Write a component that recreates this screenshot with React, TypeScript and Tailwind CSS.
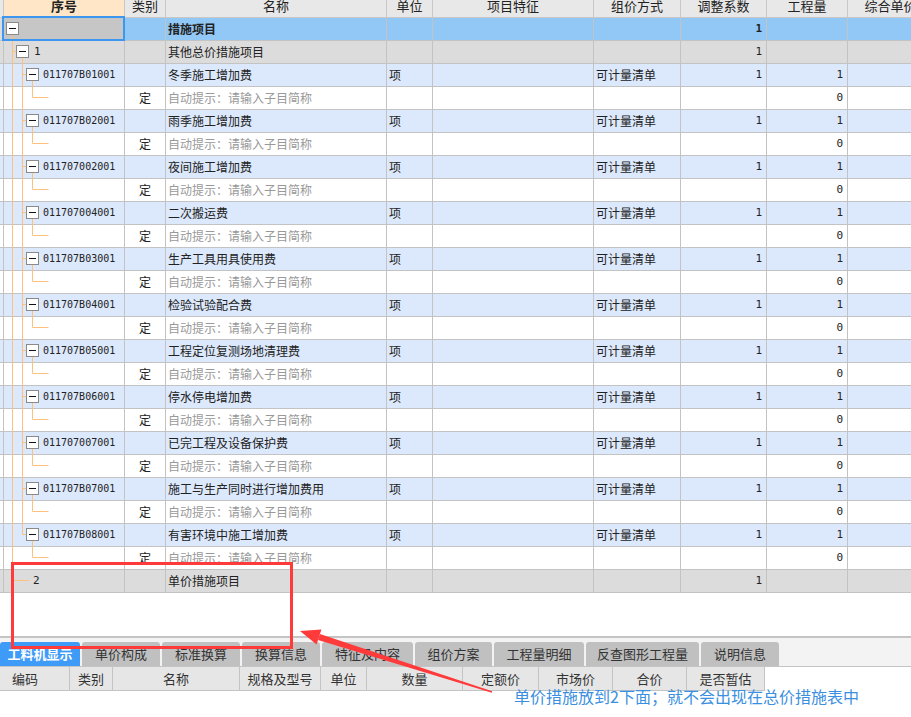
import React from 'react';

type Kind = 'root' | 'group1' | 'item' | 'itemLast' | 'ding' | 'dingLast' | 'group2';

interface Row {
    kind: Kind;
    code?: string;
    cat?: string;
    name?: string;
    unit?: string;
    method?: string;
    coef?: string;
    qty?: string;
}

const items: [string, string][] = [
    ['011707B01001', '冬季施工增加费'],
    ['011707B02001', '雨季施工增加费'],
    ['011707002001', '夜间施工增加费'],
    ['011707004001', '二次搬运费'],
    ['011707B03001', '生产工具用具使用费'],
    ['011707B04001', '检验试验配合费'],
    ['011707B05001', '工程定位复测场地清理费'],
    ['011707B06001', '停水停电增加费'],
    ['011707007001', '已完工程及设备保护费'],
    ['011707B07001', '施工与生产同时进行增加费用'],
    ['011707B08001', '有害环境中施工增加费'],
];

const rows: Row[] = [
    { kind: 'root', name: '措施项目', coef: '1' },
    { kind: 'group1', code: '1', name: '其他总价措施项目', coef: '1' },
    ...items.flatMap(([code, name], i): Row[] => {
        const last = i === items.length - 1;
        return [
            { kind: last ? 'itemLast' : 'item', code, name, unit: '项', method: '可计量清单', coef: '1', qty: '1' },
            { kind: last ? 'dingLast' : 'ding', cat: '定', name: '自动提示：请输入子目简称', qty: '0' },
        ];
    }),
    { kind: 'group2', code: '2', name: '单价措施项目', coef: '1' },
];

const COLS = 'grid grid-cols-[4px_121px_41px_221px_46px_161px_87px_86px_81px_86px]';
const CELL = 'border-r border-b border-[#c3c3c3] h-[23px] flex items-center overflow-hidden whitespace-nowrap';
const CJK = "font-['Noto_Sans_CJK_SC','Noto_Sans',sans-serif]";
const MONO = "font-['DejaVu_Sans_Mono',monospace]";
const LINE = '#fdc17e';

const Box: React.FC<{ x: number }> = ({ x }) => (
    <g>
        <rect x={x} y={4.5} width={12} height={12} fill="#fff" stroke="#8a8a8a" />
        <line x1={x + 2.5} x2={x + 9.5} y1={10.5} y2={10.5} stroke="#111" />
    </g>
);

const V: React.FC<{ x: number; y1: number; y2: number }> = ({ x, y1, y2 }) => (
    <line x1={x} x2={x} y1={y1} y2={y2} stroke={LINE} />
);

const H: React.FC<{ x1: number; x2: number }> = ({ x1, x2 }) => (
    <line x1={x1} x2={x2} y1={10.5} y2={10.5} stroke={LINE} />
);

const Tree: React.FC<{ kind: Kind }> = ({ kind }) => (
    <svg className="absolute left-0 top-0" width="121" height="23">
        {kind === 'root' && (<><V x={8.5} y1={16.5} y2={23} /><Box x={2.5} /></>)}
        {kind === 'group1' && (<><V x={8.5} y1={0} y2={23} /><H x1={8.5} x2={12.5} /><V x={18.5} y1={16.5} y2={23} /><Box x={12.5} /></>)}
        {(kind === 'item' || kind === 'itemLast') && (
            <>
                <V x={8.5} y1={0} y2={23} />
                <V x={18.5} y1={0} y2={kind === 'item' ? 23 : 10.5} />
                <H x1={18.5} x2={22.5} />
                <V x={28.5} y1={16.5} y2={23} />
                <Box x={22.5} />
            </>
        )}
        {(kind === 'ding' || kind === 'dingLast') && (
            <>
                <V x={8.5} y1={0} y2={23} />
                {kind === 'ding' && <V x={18.5} y1={0} y2={23} />}
                <V x={28.5} y1={0} y2={10.5} />
                <H x1={28.5} x2={44.5} />
            </>
        )}
        {kind === 'group2' && (<><V x={8.5} y1={0} y2={10.5} /><H x1={8.5} x2={25} /></>)}
    </svg>
);

const rowBg = (k: Kind) => {
    if (k === 'root') return 'bg-[#91c8f6]';
    if (k === 'group1' || k === 'group2') return 'bg-[#dcdcdc]';
    if (k === 'item' || k === 'itemLast') return 'bg-[#dce9fc]';
    return 'bg-white';
};

const headers = ['', '序号', '类别', '名称', '单位', '项目特征', '组价方式', '调整系数', '工程量', '综合单价'];

const tabs: [string, string][] = [
    ['工料机显示', 'w-[80px]'],
    ['单价构成', 'w-[78px]'],
    ['标准换算', 'w-[78px]'],
    ['换算信息', 'w-[78px]'],
    ['特征及内容', 'w-[91px]'],
    ['组价方案', 'w-[77px]'],
    ['工程量明细', 'w-[90px]'],
    ['反查图形工程量', 'w-[113px]'],
    ['说明信息', 'w-[78px]'],
];

const subCols: [string, string][] = [
    ['编码', 'w-[70px] justify-start pl-[12px]'],
    ['类别', 'w-[43px] justify-center'],
    ['名称', 'w-[127px] justify-center'],
    ['规格及型号', 'w-[81px] justify-center'],
    ['单位', 'w-[46px] justify-center'],
    ['数量', 'w-[96px] justify-center'],
    ['定额价', 'w-[76px] justify-center'],
    ['市场价', 'w-[74px] justify-center'],
    ['合价', 'w-[74px] justify-center'],
    ['是否暂估', 'w-[78px] justify-center'],
];

export default function App() {
    return (
        <div className={`relative w-[911px] h-[717px] overflow-hidden bg-white text-[#222] ${CJK}`}>
            {/* header */}
            <div className={`${COLS} bg-[#e8e8e8]`}>
                {headers.map((h, i) => (
                    <div
                        key={i}
                        className={`border-r border-b border-[#c8c8c8] h-[18px] flex justify-center overflow-hidden whitespace-nowrap text-[13px] leading-[13px] ${i === 1 ? 'bg-[#ffe6c6] font-bold' : ''}`}
                    >
                        <span className="-mt-[1px]">{h}</span>
                    </div>
                ))}
            </div>

            {/* rows */}
            {rows.map((r, idx) => {
                const isGroup = r.kind === 'root' || r.kind === 'group1' || r.kind === 'group2';
                const isDing = r.kind === 'ding' || r.kind === 'dingLast';
                return (
                    <div key={idx} className={`${COLS} ${rowBg(r.kind)} text-[12px]`}>
                        <div className={`${CELL} ${r.kind === 'root' ? 'bg-[#dcdcdc]' : ''}`} />
                        <div className={`${CELL} relative overflow-visible ${r.kind === 'root' ? 'bg-[#c6c6c6]' : ''}`}>
                            <Tree kind={r.kind} />
                            {r.code && (
                                <span
                                    className={`absolute ${MONO} text-[10px] leading-[22px] top-0 ${r.kind === 'group1' ? 'left-[30px] text-[11px]' : r.kind === 'group2' ? 'left-[29px] text-[11px]' : 'left-[39px]'}`}
                                >
                                    {r.code}
                                </span>
                            )}
                            {r.kind === 'root' && (
                                <span className="absolute -left-[2px] -top-[2px] -right-[1px] -bottom-[1px] border-2 border-[#3d96f0]" />
                            )}
                        </div>
                        <div className={`${CELL} justify-center`}>{r.cat}</div>
                        <div className={`${CELL} pl-[2px] ${isDing ? 'text-[#999]' : ''} ${r.kind === 'root' ? 'font-bold' : ''}`}>{r.name}</div>
                        <div className={`${CELL} pl-[2px]`}>{r.unit}</div>
                        <div className={CELL} />
                        <div className={`${CELL} pl-[2px]`}>{r.method}</div>
                        <div className={`${CELL} justify-end pr-[4px] ${MONO} text-[11px] ${r.kind === 'root' ? 'font-bold' : ''}`}>{r.coef}</div>
                        <div className={`${CELL} justify-end pr-[4px] ${MONO} text-[11px]`}>{r.qty}</div>
                        <div className={CELL}>{isGroup ? '' : ''}</div>
                    </div>
                );
            })}

            {/* empty area */}
            <div className="h-[43px]" />

            {/* bottom panel */}
            <div className="border-t-2 border-[#c4c4c4]">
                <div className="h-[29px] bg-[#f3f3f3] border-b border-[#c4c4c4] flex items-end gap-[2px]">
                    {tabs.map(([t, w], i) => (
                        <div
                            key={t}
                            className={`${w} h-[24px] rounded-t-[3px] flex items-center justify-center text-[13px] ${i === 0 ? 'bg-[#3f9bf8] text-white font-bold' : 'bg-[#c0c0c0] text-[#333]'}`}
                        >
                            {t}
                        </div>
                    ))}
                </div>
                <div className="flex">
                    {subCols.map(([t, w]) => (
                        <div key={t} className={`${w} h-[24px] flex items-center text-[13px] text-[#333] bg-[#e6e6e6] border-r border-b border-[#c4c4c4]`}>
                            {t}
                        </div>
                    ))}
                </div>
            </div>

            {/* annotation */}
            <div className="absolute left-[11px] top-[562px] w-[282px] h-[87px] border-[3px] border-[#ff3a3a]" />
            <svg className="absolute left-0 top-0 pointer-events-none" width="911" height="717">
                <polygon points="318.1,639.9 319.9,634.1 492.2,691.3 491.8,692.7" fill="#ff3a3a" />
                <polygon points="300,631 321.4,629.4 316.6,644.6" fill="#ff3a3a" />
            </svg>
            <div className="absolute left-[514px] top-[686px] text-[16px] leading-[20px] text-[#3b8fe0] whitespace-nowrap">
                单价措施放到2下面；就不会出现在总价措施表中
            </div>
        </div>
    );
}
